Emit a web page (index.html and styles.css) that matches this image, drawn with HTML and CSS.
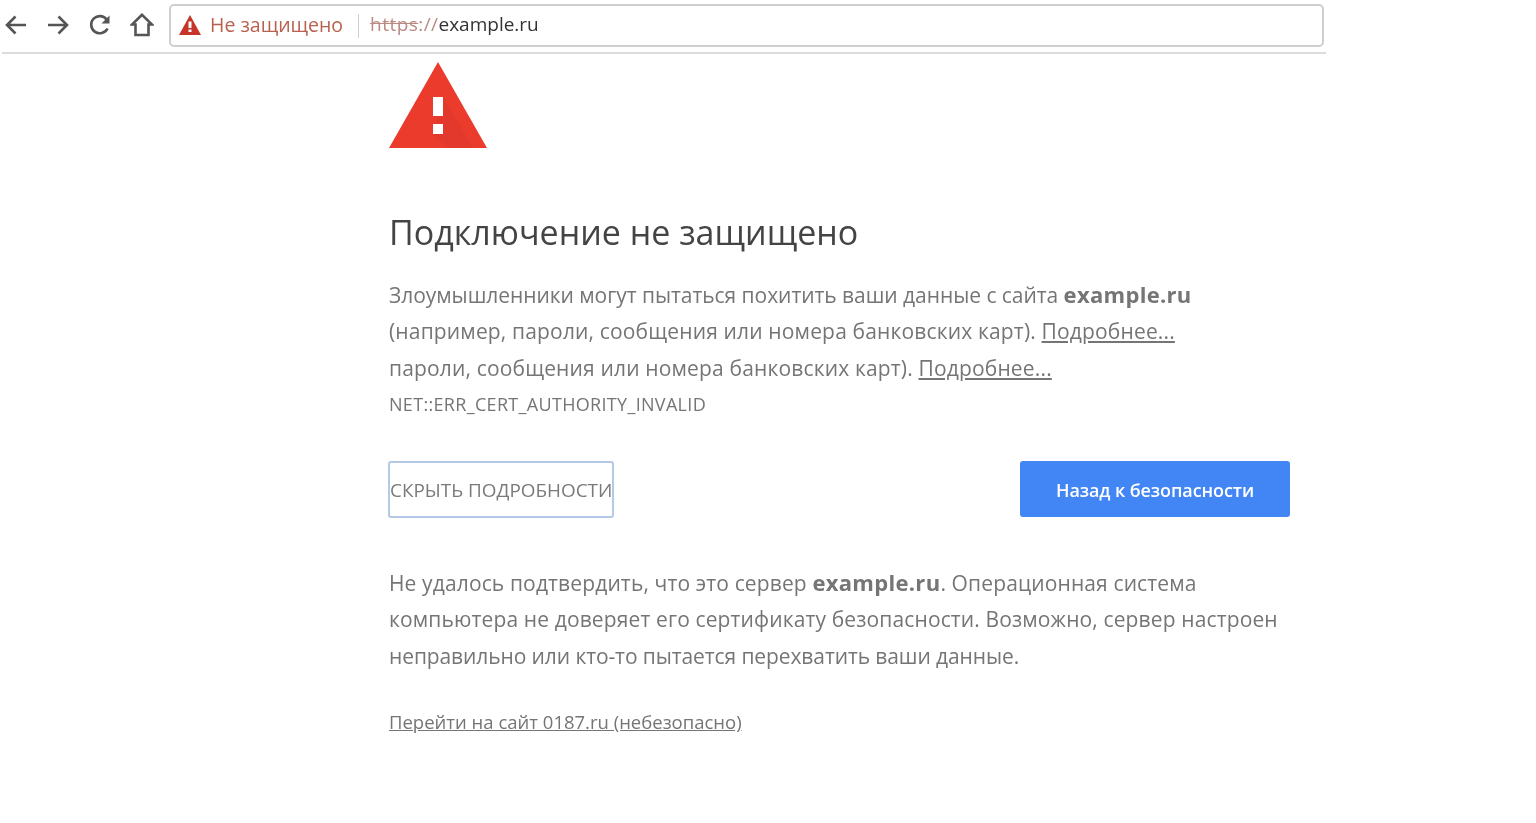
FILE: index.html
```html
<!DOCTYPE html>
<html lang="ru">
<head>
    <meta charset="UTF-8">
    <meta name="viewport" content="width=device-width, initial-scale=1.0">
    <title>Подключение не защищено</title>
    <link rel="stylesheet" href="styles.css">
</head>
<body>
    <div class="toolbar">
        <div class="nav-icons">
            <svg class="nav-icon" viewBox="0 0 24 24"><path d="M22 12H3M11.500 3.500 3 12l8.500 8.500"/></svg>
            <svg class="nav-icon" viewBox="0 0 24 24"><path d="M2 12h19M12.500 3.500 21 12l-8.500 8.500"/></svg>
            <svg class="nav-icon" viewBox="0 0 24 24"><path d="M19.500 15.500A8.600 8.600 0 1 1 19 7"/><path class="solid" d="M21.500 2.500v8h-8z"/></svg>
            <svg class="nav-icon" viewBox="0 0 24 24"><path d="M12 1.800 2 11.500h3.500v10.500h13V11.500H22z"/></svg>
        </div>
        <div class="address-bar">
            <svg class="warn-small" viewBox="0 0 22 20"><path fill="#c5352a" d="M11 0 22 20H0z"/><path fill="#fff" d="M9.500 6.500h3v6.500h-3zM9.500 14.500h3v2.500h-3z"/></svg>
            <span class="not-secure">Не защищено</span>
            <span class="divider"></span>
            <span class="url"><span class="scheme"><s>https</s>://</span>example.ru</span>
        </div>
    </div>

    <div class="content">
        <svg class="warn-big" viewBox="0 0 98 86">
            <path fill="#ea3b2d" d="M49 0 98 86H0z"/>
            <path fill="#e2392c" d="M54 35 84 86H60L44 72z"/>
            <path fill="#fff" d="M44 35h10v19H44zM44 62h10v10H44z"/>
        </svg>
        <h1>Подключение не защищено</h1>
        <div class="intro">
            <p>Злоумышленники могут пытаться похитить ваши данные с сайта <b>example.ru</b></p>
            <p>(например, пароли, сообщения или номера банковских карт). <a href="#">Подробнее...</a></p>
            <p>пароли, сообщения или номера банковских карт). <a href="#">Подробнее...</a></p>
            <p class="code">NET::ERR_CERT_AUTHORITY_INVALID</p>
        </div>
        <div class="buttons">
            <button class="btn-details">СКРЫТЬ ПОДРОБНОСТИ</button>
            <button class="btn-back">Назад к безопасности</button>
        </div>
        <div class="details">
            <p>Не удалось подтвердить, что это сервер <b>example.ru</b>. Операционная система</p>
            <p>компьютера не доверяет его сертификату безопасности. Возможно, сервер настроен</p>
            <p>неправильно или кто-то пытается перехватить ваши данные.</p>
        </div>
        <a class="proceed" href="#">Перейти на сайт 0187.ru (небезопасно)</a>
    </div>
</body>
</html>
```

FILE: styles.css
```css
html, body {
    margin: 0;
    padding: 0;
}

body {
    background: #fff;
    color: #757575;
    font-family: "Open Sans", "Noto Sans", sans-serif;
    overflow: hidden;
    filter: blur(0.5px);
}

p {
    margin: 0;
}

a {
    color: #757575;
}

.toolbar {
    display: flex;
    align-items: flex-start;
    box-sizing: border-box;
    width: 1324px;
    height: 54px;
    margin-left: 2px;
    padding-top: 4px;
    border-bottom: 2px solid #dcdcdc;
}

.nav-icons {
    display: flex;
    gap: 18px;
    width: 167px;
    box-sizing: border-box;
    padding: 9px 0 0 2px;
}

.nav-icon {
    width: 24px;
    height: 24px;
    fill: none;
    stroke: #555;
    stroke-width: 2.6;
}

.nav-icon .solid {
    fill: #555;
    stroke: none;
}

.address-bar {
    display: flex;
    align-items: center;
    box-sizing: border-box;
    width: 1155px;
    height: 43px;
    padding: 0 0 3px 8px;
    border: 2px solid #cfcfcf;
    border-radius: 5px;
    font-size: 19px;
}

.warn-small {
    width: 22px;
    height: 20px;
    margin: 2px 9px 0 0;
}

.not-secure {
    color: #b9614f;
    font-size: 19.500px;
}

.divider {
    width: 1px;
    height: 24px;
    margin: 3px 11px 0 15px;
    background: #cfcfcf;
}

.url {
    color: #333;
}

.scheme {
    color: #b98a84;
    letter-spacing: 0.45px;
}

.content {
    width: 901px;
    margin-left: 389px;
    padding-top: 8px;
}

.warn-big {
    display: block;
    width: 98px;
    height: 86px;
}

h1 {
    margin: 60px 0 0;
    color: #444;
    font-size: 34px;
    font-weight: 400;
    line-height: 48px;
}

.intro {
    margin-top: 21px;
    font-size: 21px;
    line-height: 36.300px;
    letter-spacing: 0.16px;
}

.intro p:first-child {
    letter-spacing: -0.05px;
}

.intro b,
.details b {
    font-size: 22px;
    line-height: 1;
    letter-spacing: 0.3px;
}

.intro .code {
    font-size: 18px;
    letter-spacing: 0.32px;
}

.buttons {
    display: flex;
    justify-content: space-between;
    margin: 39px 0 0 -1px;
}

.btn-details {
    box-sizing: border-box;
    width: 226px;
    height: 57px;
    padding: 0 3px 0 0;
    background: #fff;
    border: 2px solid #b4c9e6;
    border-radius: 3px;
    color: #7a7a7a;
    font-family: inherit;
    font-size: 18.900px;
    white-space: nowrap;
}

.btn-back {
    width: 270px;
    height: 56px;
    padding-top: 3px;
    background: #4285f4;
    border: 0;
    border-radius: 3px;
    color: #fff;
    font-family: inherit;
    font-size: 18px;
    font-weight: 600;
    letter-spacing: -0.1px;
}

.details {
    margin-top: 47px;
    font-size: 21px;
    line-height: 36.200px;
    letter-spacing: 0.13px;
}

.details p:last-child {
    letter-spacing: -0.1px;
}

.proceed {
    display: inline-block;
    margin-top: 35px;
    font-size: 18.500px;
    line-height: 26px;
}
```
